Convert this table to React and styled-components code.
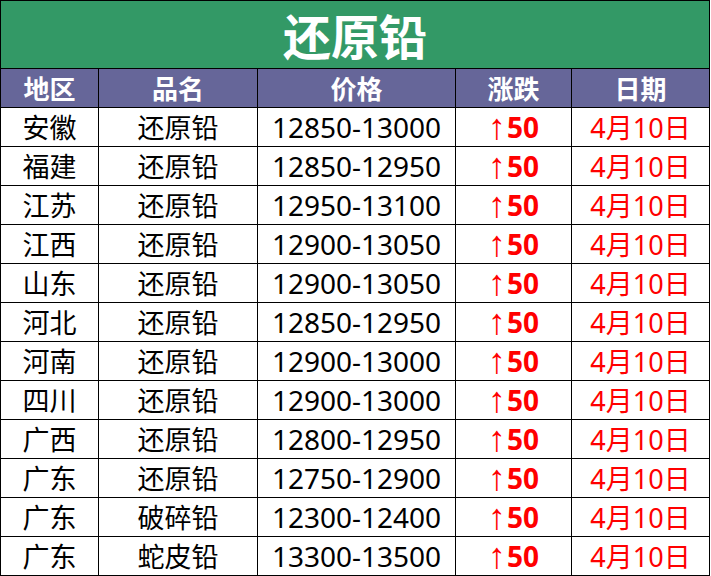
import React from 'react'
import styled, { createGlobalStyle } from 'styled-components'

const GlobalStyle = createGlobalStyle`
  html, body {
    margin: 0;
    padding: 0;
    background: #ffffff;
  }
  body {
    font-family: "Noto Sans", "Noto Sans CJK SC", sans-serif;
  }
`

const GREEN = '#339966'
const PURPLE = '#666699'
const RED = '#ff0000'

const rows = [
  ['安徽', '还原铅', '12850-13000'],
  ['福建', '还原铅', '12850-12950'],
  ['江苏', '还原铅', '12950-13100'],
  ['江西', '还原铅', '12900-13050'],
  ['山东', '还原铅', '12900-13050'],
  ['河北', '还原铅', '12850-12950'],
  ['河南', '还原铅', '12900-13000'],
  ['四川', '还原铅', '12900-13000'],
  ['广西', '还原铅', '12800-12950'],
  ['广东', '还原铅', '12750-12900'],
  ['广东', '破碎铅', '12300-12400'],
  ['广东', '蛇皮铅', '13300-13500'],
]

const headers = ['地区', '品名', '价格', '涨跌', '日期']

const Sheet = styled.div`
  width: 710px;
  display: grid;
  grid-template-columns: 97px 158px 197px 115px 137px;
  grid-template-rows: 67px 38px;
  grid-auto-rows: 38px;
  gap: 1px;
  padding: 1px;
  box-sizing: border-box;
  background: #000000;
`

const Title = styled.div`
  grid-column: 1 / -1;
  background: ${GREEN};
  color: #ffffff;
  font-family: "Noto Sans CJK SC", sans-serif;
  font-weight: 700;
  font-size: 48px;
  display: flex;
  align-items: center;
  justify-content: center;
  line-height: 1;
  padding-bottom: 2px;
`

const HeadCell = styled.div`
  background: ${PURPLE};
  color: #ffffff;
  font-family: "Noto Sans CJK SC", sans-serif;
  font-weight: 700;
  font-size: 26px;
  display: flex;
  align-items: center;
  justify-content: center;
  line-height: 1;
`

const Cell = styled.div`
  background: #ffffff;
  color: ${(p) => (p.$red ? RED : '#000000')};
  font-size: ${(p) => (p.$num ? '28px' : '27px')};
  font-weight: ${(p) => (p.$bold ? 700 : 400)};
  display: flex;
  align-items: center;
  justify-content: center;
  line-height: 1;
  white-space: nowrap;
`

const Arrow = styled.span`
  font-weight: 400;
  font-family: "Liberation Sans", sans-serif;
  font-size: 36px;
  line-height: 1;
  margin-right: 1px;
`

export default function App() {
  return (
    <>
      <GlobalStyle />
      <Sheet>
        <Title>还原铅</Title>
        {headers.map((h) => (
          <HeadCell key={h}>{h}</HeadCell>
        ))}
        {rows.map(([area, name, price], i) => (
          <React.Fragment key={i}>
            <Cell>{area}</Cell>
            <Cell>{name}</Cell>
            <Cell $num>{price}</Cell>
            <Cell $red $bold $num>
              <Arrow>↑</Arrow>50
            </Cell>
            <Cell $red>4月10日</Cell>
          </React.Fragment>
        ))}
      </Sheet>
    </>
  )
}
